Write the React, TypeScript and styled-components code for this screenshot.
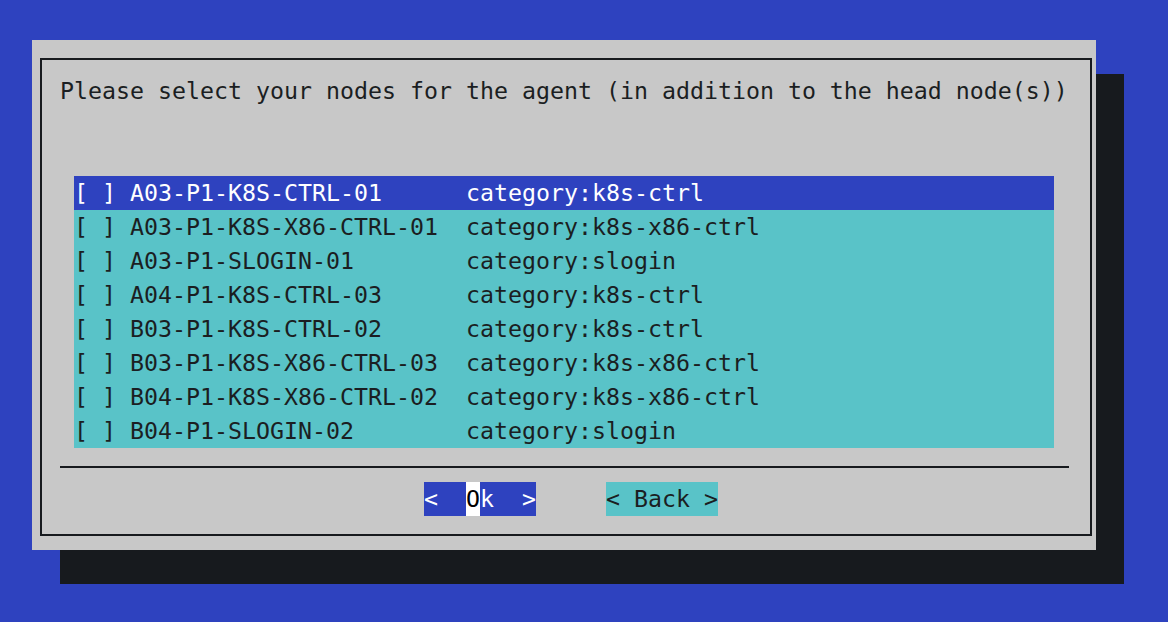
import React from 'react';
import styled, { createGlobalStyle } from 'styled-components';

const GlobalStyle = createGlobalStyle`
  html, body {
    margin: 0;
    padding: 0;
    background: #2e42bf;
  }
  body {
    font-family: 'DejaVu Sans Mono', 'Liberation Mono', monospace;
  }
`;

const Screen = styled.div`
  width: 1168px;
  height: 622px;
  background: #2e42bf;
  padding: 40px 0 0 32px;
  box-sizing: border-box;
  font-family: 'DejaVu Sans Mono', 'Liberation Mono', monospace;
  font-size: 23.25px;
  line-height: 34px;
  white-space: pre;
`;

const Dialog = styled.div`
  width: 1064px;
  height: 510px;
  box-sizing: border-box;
  background: #c8c8c8;
  box-shadow: 28px 34px 0 #171a1e;
  padding: 18px 4px 14px 8px;
  display: flex;
`;

const Frame = styled.div`
  flex: 1;
  border: 2px solid #171a1e;
  display: flex;
  flex-direction: column;
  color: #1b1e22;
`;

const Prompt = styled.div`
  margin: 14px 0 0 18px;
  height: 34px;
`;

const List = styled.div`
  margin: 68px 0 0 32px;
  width: 980px;
  display: flex;
  flex-direction: column;
`;

const Row = styled.div<{ $active?: boolean }>`
  height: 34px;
  display: flex;
  background: ${p => (p.$active ? '#2e42bf' : '#59c3c8')};
  color: ${p => (p.$active ? '#ffffff' : '#1b1e22')};
`;

const NameCell = styled.span`
  width: 392px;
  flex: none;
`;

const Separator = styled.div`
  margin: 18px 0 0 18px;
  width: 1009px;
  height: 2px;
  background: #171a1e;
`;

const ButtonBar = styled.div`
  margin: 14px 0 0 382px;
  display: flex;
  gap: 70px;
`;

const Button = styled.div<{ $focused?: boolean }>`
  width: 112px;
  height: 34px;
  display: flex;
  background: ${p => (p.$focused ? '#2e42bf' : '#59c3c8')};
  color: ${p => (p.$focused ? '#ffffff' : '#1b1e22')};
`;

const Cursor = styled.span`
  background: #ffffff;
  color: #000000;
`;

const nodes = [
  ['A03-P1-K8S-CTRL-01', 'k8s-ctrl'],
  ['A03-P1-K8S-X86-CTRL-01', 'k8s-x86-ctrl'],
  ['A03-P1-SLOGIN-01', 'slogin'],
  ['A04-P1-K8S-CTRL-03', 'k8s-ctrl'],
  ['B03-P1-K8S-CTRL-02', 'k8s-ctrl'],
  ['B03-P1-K8S-X86-CTRL-03', 'k8s-x86-ctrl'],
  ['B04-P1-K8S-X86-CTRL-02', 'k8s-x86-ctrl'],
  ['B04-P1-SLOGIN-02', 'slogin'],
];

export default function App() {
  return (
    <>
      <GlobalStyle />
      <Screen>
        <Dialog>
          <Frame>
            <Prompt>Please select your nodes for the agent (in addition to the head node(s))</Prompt>
            <List>
              {nodes.map(([name, cat], i) => (
                <Row key={name} $active={i === 0}>
                  <NameCell>[ ] {name}</NameCell>
                  <span>category:{cat}</span>
                </Row>
              ))}
            </List>
            <Separator />
            <ButtonBar>
              <Button $focused>
                <span>{'<  '}</span>
                <Cursor>O</Cursor>
                <span>{'k  >'}</span>
              </Button>
              <Button>{'< Back >'}</Button>
            </ButtonBar>
          </Frame>
        </Dialog>
      </Screen>
    </>
  );
}
